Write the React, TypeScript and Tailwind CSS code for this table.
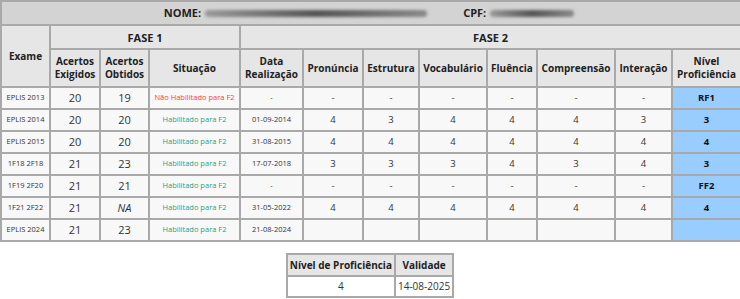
import React from "react";

type Row = {
  exame: string;
  exigidos: string;
  obtidos: string;
  obtidosItalic?: boolean;
  situacao: string;
  habilitado: boolean;
  data: string;
  notas: string[];
  nivel: string;
};

const rows: Row[] = [
  { exame: "EPLIS 2013", exigidos: "20", obtidos: "19", situacao: "Não Habilitado para F2", habilitado: false, data: "-", notas: ["-", "-", "-", "-", "-", "-"], nivel: "RF1" },
  { exame: "EPLIS 2014", exigidos: "20", obtidos: "20", situacao: "Habilitado para F2", habilitado: true, data: "01-09-2014", notas: ["4", "3", "4", "4", "4", "3"], nivel: "3" },
  { exame: "EPLIS 2015", exigidos: "20", obtidos: "20", situacao: "Habilitado para F2", habilitado: true, data: "31-08-2015", notas: ["4", "4", "4", "4", "4", "4"], nivel: "4" },
  { exame: "1F18 2F18", exigidos: "21", obtidos: "23", situacao: "Habilitado para F2", habilitado: true, data: "17-07-2018", notas: ["3", "3", "3", "4", "3", "4"], nivel: "3" },
  { exame: "1F19 2F20", exigidos: "21", obtidos: "21", situacao: "Habilitado para F2", habilitado: true, data: "-", notas: ["-", "-", "-", "-", "-", "-"], nivel: "FF2" },
  { exame: "1F21 2F22", exigidos: "21", obtidos: "NA", obtidosItalic: true, situacao: "Habilitado para F2", habilitado: true, data: "31-05-2022", notas: ["4", "4", "4", "4", "4", "4"], nivel: "4" },
  { exame: "EPLIS 2024", exigidos: "21", obtidos: "23", situacao: "Habilitado para F2", habilitado: true, data: "21-08-2024", notas: ["", "", "", "", "", ""], nivel: "" },
];

const colWidths = [49, 50, 49, 91, 63, 60, 56, 68, 50, 78, 57, 69];

const th = "border-2 border-[#a9a9a9] bg-[#e6e6e6] font-bold text-[10px] leading-[13px] text-[#222] text-center p-0";
const td = "border-2 border-[#a9a9a9] bg-[#f8f8f8] text-center p-0";

function Blur({ width }: { width: number }) {
  return (
    <span className="inline-block align-middle h-[7px] mx-1 rounded-full bg-gradient-to-r from-[#9a9a9a] via-[#555] to-[#8a8a8a] blur-[1.5px]" style={{ width }} />
  );
}

export default function App() {
  return (
    <div className="w-[740px] h-[299px] bg-white" style={{ fontFamily: '"Open Sans", "Noto Sans", sans-serif' }}>
      <table className="w-[740px] table-fixed border-collapse">
        <colgroup>
          {colWidths.map((w, i) => (
            <col key={i} style={{ width: w }} />
          ))}
        </colgroup>
        <thead>
          <tr className="h-[24px]">
            <th colSpan={12} className="border-2 border-[#a9a9a9] bg-[#d3d3d3] text-[11px] font-bold text-[#222] p-0">
              <span>NOME:</span>
              <Blur width={222} />
              <span className="ml-8">CPF:</span>
              <Blur width={84} />
            </th>
          </tr>
          <tr className="h-[24px]">
            <th rowSpan={2} className={th}>Exame</th>
            <th colSpan={3} className={`${th} text-[11px]`}>FASE 1</th>
            <th colSpan={8} className={`${th} text-[11px]`}>FASE 2</th>
          </tr>
          <tr className="h-[38px]">
            <th className={th}>Acertos<br />Exigidos</th>
            <th className={th}>Acertos<br />Obtidos</th>
            <th className={th}>Situação</th>
            <th className={th}>Data<br />Realização</th>
            <th className={th}>Pronúncia</th>
            <th className={th}>Estrutura</th>
            <th className={th}>Vocabulário</th>
            <th className={th}>Fluência</th>
            <th className={th}>Compreensão</th>
            <th className={th}>Interação</th>
            <th className={th}>Nível<br />Proficiência</th>
          </tr>
        </thead>
        <tbody>
          {rows.map((r) => (
            <tr key={r.exame} className="h-[22px]">
              <td className={`${td} text-[7.5px] text-[#333]`}>{r.exame}</td>
              <td className={`${td} text-[11px] text-[#333]`}>{r.exigidos}</td>
              <td className={`${td} text-[11px] text-[#333] ${r.obtidosItalic ? "italic" : ""}`}>{r.obtidos}</td>
              {r.habilitado ? (
                <td className={`${td} text-[7.5px] text-[#2e9e7e]`}>{r.situacao}</td>
              ) : (
                <td className={`${td} text-[7.5px] text-[#ff3b3b]`}>{r.situacao}</td>
              )}
              <td className={`${td} text-[7.5px] text-[#333]`}>{r.data}</td>
              {r.notas.map((n, i) => (
                <td key={i} className={`${td} text-[9.5px] text-[#333]`}>{n}</td>
              ))}
              <td className="border-2 border-[#a9a9a9] bg-[#99ccff] text-center p-0 text-[9.5px] font-bold text-[#111]">{r.nivel}</td>
            </tr>
          ))}
        </tbody>
      </table>

      <div className="flex justify-center mt-[11px]">
        <table className="border-collapse">
          <thead>
            <tr className="h-[22px]">
              <th className={`${th} whitespace-nowrap px-[2px]`}>Nível de Proficiência</th>
              <th className={`${th} whitespace-nowrap px-[4px]`}>Validade</th>
            </tr>
          </thead>
          <tbody>
            <tr className="h-[21px]">
              <td className="border-2 border-[#a9a9a9] bg-white text-center p-0 text-[10px] text-[#333]">4</td>
              <td className="border-2 border-[#a9a9a9] bg-white text-center px-[2px] py-0 text-[10px] text-[#333]">14-08-2025</td>
            </tr>
          </tbody>
        </table>
      </div>
    </div>
  );
}
